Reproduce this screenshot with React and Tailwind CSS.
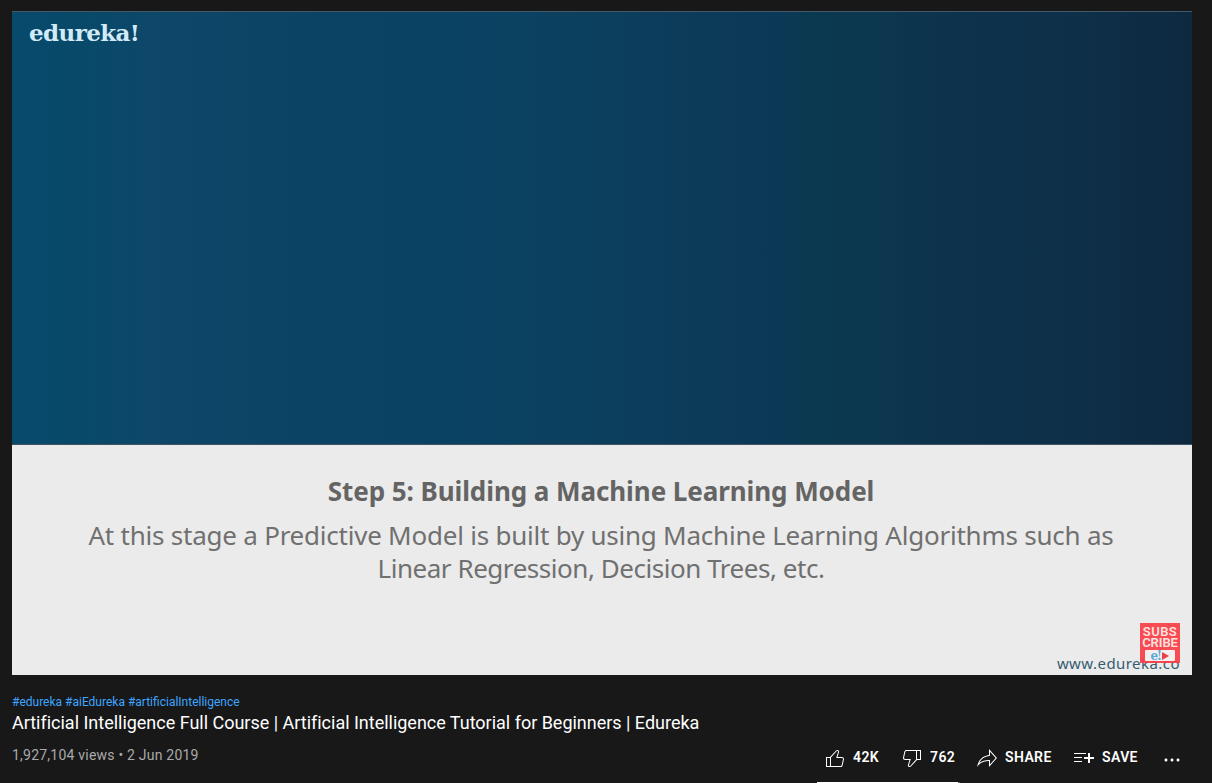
import React from "react";

const ICONS = {
  like: "M18.77,11h-4.23l1.52-4.94C16.38,5.03,15.54,4,14.38,4c-0.58,0-1.14,0.24-1.52,0.65L7,11H3v10h4h1h9.43c1.06,0,1.98-0.67,2.19-1.61l1.34-6C21.23,12.15,20.18,11,18.77,11z M7,20H4v-8h3V20z M19.98,13.17l-1.34,6C18.54,19.65,18.03,20,17.43,20H8v-8.61l5.6-6.06C13.79,5.12,14.08,5,14.38,5c0.26,0,0.5,0.11,0.63,0.3c0.07,0.1,0.15,0.26,0.09,0.47l-1.52,4.94L13.18,12h1.35h4.23c0.41,0,0.8,0.17,1.03,0.46C19.92,12.61,20.05,12.86,19.98,13.17z",
  dislike:
    "M17,4h-1H6.57C5.5,4,4.59,4.67,4.38,5.61l-1.34,6C2.77,12.85,3.82,14,5.23,14h4.23l-1.52,4.94C7.62,19.97,8.46,21,9.62,21c0.58,0,1.14-0.24,1.52-0.65L17,14h4V4H17z M10.4,19.67C10.21,19.88,9.92,20,9.62,20c-0.26,0-0.5-0.11-0.63-0.3c-0.07-0.1-0.15-0.26-0.09-0.47l1.52-4.94l0.4-1.29H9.46H5.23c-0.41,0-0.8-0.17-1.03-0.46c-0.12-0.15-0.25-0.4-0.18-0.72l1.34-6C5.46,5.35,5.97,5,6.57,5H16v8.61L10.4,19.67z M20,13h-3V5h3V13z",
  share:
    "M15,5.63L20.66,12L15,18.37V15v-1h-1c-3.96,0-7.14,1-9.75,3.09c1.84-4.07,5.11-6.4,9.89-7.1L15,9.86V9V5.63 M14,3v6C6.22,10.13,3.11,15.33,2,21c2.78-3.97,6.44-6,12-6v6l8-9L14,3L14,3z",
  save: "M22,13h-4v4h-2v-4h-4v-2h4V7h2v4h4V13z M14,7H2v1h12V7z M2,12h8v-1H2V12z M2,16h8v-1H2V16z",
  more: "M7.5,12c0,0.83-0.67,1.5-1.5,1.5S4.5,12.83,4.5,12s0.67-1.5,1.5-1.5S7.5,11.17,7.5,12z M12,10.5c-0.83,0-1.5,0.67-1.5,1.5s0.67,1.5,1.5,1.5s1.5-0.67,1.5-1.5S12.83,10.5,12,10.5z M18,10.5c-0.83,0-1.5,0.67-1.5,1.5s0.67,1.5,1.5,1.5s1.5-0.67,1.5-1.5S18.83,10.5,18,10.5z",
};

const Icon = ({ name }) => (
  <svg viewBox="0 0 24 24" className="h-6 w-6 shrink-0 fill-white">
    <path d={ICONS[name]} />
  </svg>
);

const Action = ({ icon, label, className }) => (
  <button className={`flex h-6 items-start gap-1.5 ${className}`}>
    <Icon name={icon} />
    <span className="text-sm leading-[22px] font-semibold tracking-[0.4px] whitespace-nowrap">
      {label}
    </span>
  </button>
);

const SubscribeBadge = () => (
  <div className="absolute right-3 bottom-3 flex h-10 w-10 flex-col items-center bg-[#fb3a41]/90 pt-[3px] font-[Roboto,sans-serif] text-[13px] leading-[11px] font-semibold text-[#ffe3e0]">
    <span className="tracking-[0.4px]">SUBS</span>
    <span className="tracking-[-0.1px]">CRIBE</span>
    <div className="mt-[2px] flex h-[11px] w-[30px] items-center justify-center gap-[2px] rounded-[1px] bg-[#f4eeee]">
      <span className="font-['DejaVu_Serif',serif] text-[12px] leading-[10px] font-bold tracking-[-1.5px] text-[#58a9d8]">
        e!
      </span>
      <svg viewBox="0 0 7 8" className="h-2 w-[7px] fill-[#ee3e48]">
        <path d="M0 0L7 4L0 8Z" />
      </svg>
    </div>
  </div>
);

const Player = () => (
  <div className="relative flex h-[664px] w-[1180px] flex-col overflow-hidden bg-[#ebebeb] font-['Noto_Sans','Open_Sans',sans-serif]">
    <div className="h-[434px] border-t border-b border-t-[#42586b] border-b-[#3d5262] bg-[linear-gradient(90deg,#074a6b_0%,#084969_6%,#0d4769_11%,#0b4364_25%,#0a4263_38%,#0c405f_48%,#0c3b59_58%,#0c3857_65%,#0b394f_68%,#0c374e_74%,#0d324c_80%,#0e2f48_91%,#0d2940_100%)] pt-[9px] pl-[17px]">
      <span className="block font-['DejaVu_Serif',serif] text-[23px] leading-6 font-bold tracking-[-0.6px] text-[#d3ebf9]">
        edureka!
      </span>
    </div>
    <div className="flex flex-col items-center pt-[28px] pr-[2px] text-[#707070]">
      <h2 className="text-[26px] leading-9 font-bold tracking-[-0.07px] whitespace-nowrap text-[#646464]">
        Step 5: Building a Machine Learning Model
      </h2>
      <p className="mt-[10px] text-center text-[26px] leading-[33px] tracking-[-0.23px] whitespace-nowrap">
        At this stage a Predictive Model is built by using Machine Learning Algorithms such as
        <br />
        <span className="tracking-[-0.46px]">Linear Regression, Decision Trees, etc.</span>
      </p>
    </div>
    <span className="absolute right-[12px] bottom-[2px] text-[15px] leading-5 tracking-[0.45px] text-[#365b70]">
      www.edureka.co
    </span>
    <SubscribeBadge />
  </div>
);

export default function App() {
  return (
    <div className="relative h-[783px] w-[1212px] overflow-hidden bg-[#181818] pt-[11px] pl-3 font-[Roboto,sans-serif] text-white">
      <Player />
      <div className="pt-[18px] pr-5">
        <div className="flex gap-[3px] text-xs leading-[18px] text-[#3ea6ff]">
          <a>#edureka</a>
          <a>#aiEdureka</a>
          <a>#artificialIntelligence</a>
        </div>
        <h1 className="text-lg leading-6 tracking-[-0.015px]">
          Artificial Intelligence Full Course | Artificial Intelligence Tutorial for Beginners | Edureka
        </h1>
        <div className="flex items-start justify-between pt-[9px]">
          <div className="text-sm leading-[22px] tracking-[0.22px] text-[#aaaaaa]">
            1,927,104 views • 2 Jun 2019
          </div>
          <div className="flex pt-[2px]">
            <Action icon="like" label="42K" className="w-[77px]" />
            <Action icon="dislike" label="762" className="w-[75px]" />
            <Action icon="share" label="SHARE" className="w-[97px]" />
            <Action icon="save" label="SAVE" className="w-[88px]" />
            <button className="mr-2 h-6 pt-[2px]">
              <Icon name="more" />
            </button>
          </div>
        </div>
      </div>
      {/* like ratio bar */}
      <div className="absolute bottom-0 left-[817px] flex h-px w-[143px]">
        <div className="w-[141px] bg-white" />
        <div className="flex-1 bg-[#606060]" />
      </div>
    </div>
  );
}
